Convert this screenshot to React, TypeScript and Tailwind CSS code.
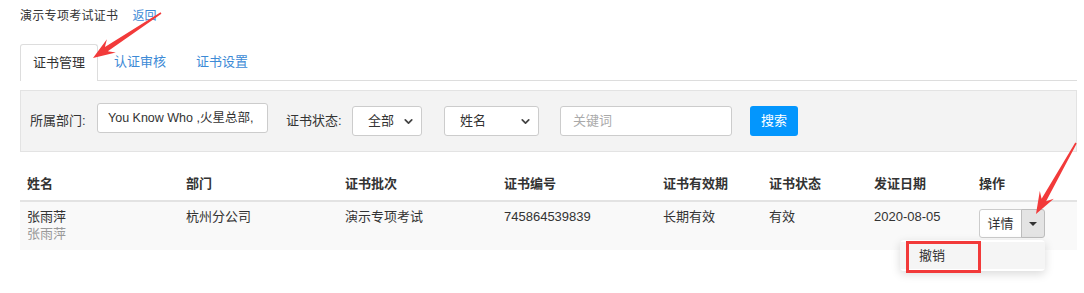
import { ChevronDown } from "lucide-react";

const cols = "grid grid-cols-[159px_159px_159px_159px_106px_105px_105px_1fr]";

function arrowPoints(x1: number, y1: number, x2: number, y2: number) {
  const head = 22;
  const wing = 8;
  const shaft = 2.6;
  const dx = x2 - x1;
  const dy = y2 - y1;
  const len = Math.hypot(dx, dy);
  const ux = dx / len;
  const uy = dy / len;
  const nx = -uy;
  const ny = ux;
  const bx = x2 - ux * head;
  const by = y2 - uy * head;
  const kx = x2 - ux * (head - 6);
  const ky = y2 - uy * (head - 6);
  const p = (x: number, y: number) => `${x.toFixed(1)},${y.toFixed(1)}`;
  return [
    p(x1 + nx * 0.8, y1 + ny * 0.8),
    p(kx + nx * shaft, ky + ny * shaft),
    p(bx + nx * wing, by + ny * wing),
    p(x2, y2),
    p(bx - nx * wing, by - ny * wing),
    p(kx - nx * shaft, ky - ny * shaft),
    p(x1 - nx * 0.8, y1 - ny * 0.8),
  ].join(" ");
}

function Select({ value, width, pad }: { value: string; width: string; pad: string }) {
  return (
    <div className={`flex h-[30px] items-center justify-between rounded-[3px] border border-[#cccccc] bg-white pr-[6px] ${width} ${pad}`}>
      <span>{value}</span>
      <ChevronDown size={13} strokeWidth={3.2} className="text-[#444]" />
    </div>
  );
}

export default function App() {
  return (
    <div className="relative h-[293px] w-[1084px] overflow-hidden bg-white pt-[7px] pl-[20px] pr-[7px] font-['Liberation_Sans','Noto_Sans_CJK_SC',sans-serif] text-[13px] text-[#333]">
      <div className="flex h-[18px] items-center text-[12px] leading-[18px]">
        <span className="tracking-[0.3px]">演示专项考试证书</span>
        <a className="ml-[14px] text-[#3d8ad6]">返回</a>
      </div>

      <div className="mt-[19px] flex h-[37px] border-b border-[#dddddd]">
        <div className="mr-[2px] flex h-[37px] items-center rounded-t-[3px] border-x border-t border-[#dddddd] bg-white px-[12px]">
          证书管理
        </div>
        <div className="mr-[2px] flex h-[36px] items-center px-[14px] text-[#3d8ad6]">认证审核</div>
        <div className="flex h-[36px] items-center px-[14px] text-[#3d8ad6]">证书设置</div>
      </div>

      <div className="mt-[9px] flex h-[62px] items-center border border-[#e3e3e3] bg-[#f3f3f3] pl-[9px]">
        <span className="w-[58px]">所属部门:</span>
        <div className="mb-[6px] ml-[9px] flex h-[30px] w-[171px] items-center rounded-[3px] border border-[#cccccc] bg-white pl-[10px] pr-[14px] text-[12.5px]">
          <div className="overflow-hidden whitespace-nowrap">You Know Who ,火星总部,地球分部</div>
        </div>
        <span className="ml-[18px] w-[58px]">证书状态:</span>
        <div className="ml-[8px]">
          <Select value="全部" width="w-[70px]" pad="pl-[15px]" />
        </div>
        <div className="ml-[22px]">
          <Select value="姓名" width="w-[95px]" pad="pl-[15px]" />
        </div>
        <div className="ml-[21px] flex h-[30px] w-[172px] items-center rounded-[3px] border border-[#cccccc] bg-white pl-[12px] text-[#aaaaaa]">
          关键词
        </div>
        <button className="ml-[18px] flex h-[30px] w-[48px] items-center justify-center rounded-[3px] bg-[#0396fd] text-white">
          搜索
        </button>
      </div>

      <div className={`${cols} mt-[16px] h-[34px] items-center border-b-2 border-[#e3e3e3] font-bold`}>
        {["姓名", "部门", "证书批次", "证书编号", "证书有效期", "证书状态", "发证日期", "操作"].map((h) => (
          <div key={h} className="pl-[7px]">
            {h}
          </div>
        ))}
      </div>

      <div className={`${cols} h-[48px] bg-[#f9f9f9] pt-[6px] leading-[17px]`}>
        <div className="pl-[7px]">
          <div>张雨萍</div>
          <div className="text-[#999999]">张雨萍</div>
        </div>
        <div className="pl-[7px]">杭州分公司</div>
        <div className="pl-[7px]">演示专项考试</div>
        <div className="pl-[7px]">745864539839</div>
        <div className="pl-[7px]">长期有效</div>
        <div className="pl-[7px]">有效</div>
        <div className="pl-[7px]">2020-08-05</div>
        <div className="pl-[7px]">
          <div className="relative mt-px flex h-[29px] w-[66px]">
            <button className="flex w-[43px] items-center justify-center rounded-l-[3px] border border-[#cccccc] bg-white">
              详情
            </button>
            <button className="-ml-px flex w-[24px] items-center justify-center rounded-r-[3px] border border-[#bdbdbd] bg-[#e4e4e4]">
              <span className="h-0 w-0 border-x-[4px] border-t-[4px] border-x-transparent border-t-[#333]" />
            </button>
            <div className="absolute right-0 top-[31px] z-10 w-[145px] rounded-[4px] bg-white py-[2px] shadow-[0_3px_10px_rgba(0,0,0,0.15)]">
              <div className="flex h-[27px] items-center bg-[#f5f5f5] pl-[19px]">撤销</div>
            </div>
          </div>
        </div>
      </div>

      <div className="pointer-events-none absolute left-[906px] top-[241px] z-20 h-[32px] w-[75px] border-[3px] border-[#f23a3a]" />

      <svg className="pointer-events-none absolute left-0 top-0 z-30" width="1084" height="293">
        <polygon points={arrowPoints(161, 13, 93, 58)} fill="#f23a3a" />
        <polygon points={arrowPoints(1076, 143, 1036, 214)} fill="#f23a3a" />
      </svg>
    </div>
  );
}
